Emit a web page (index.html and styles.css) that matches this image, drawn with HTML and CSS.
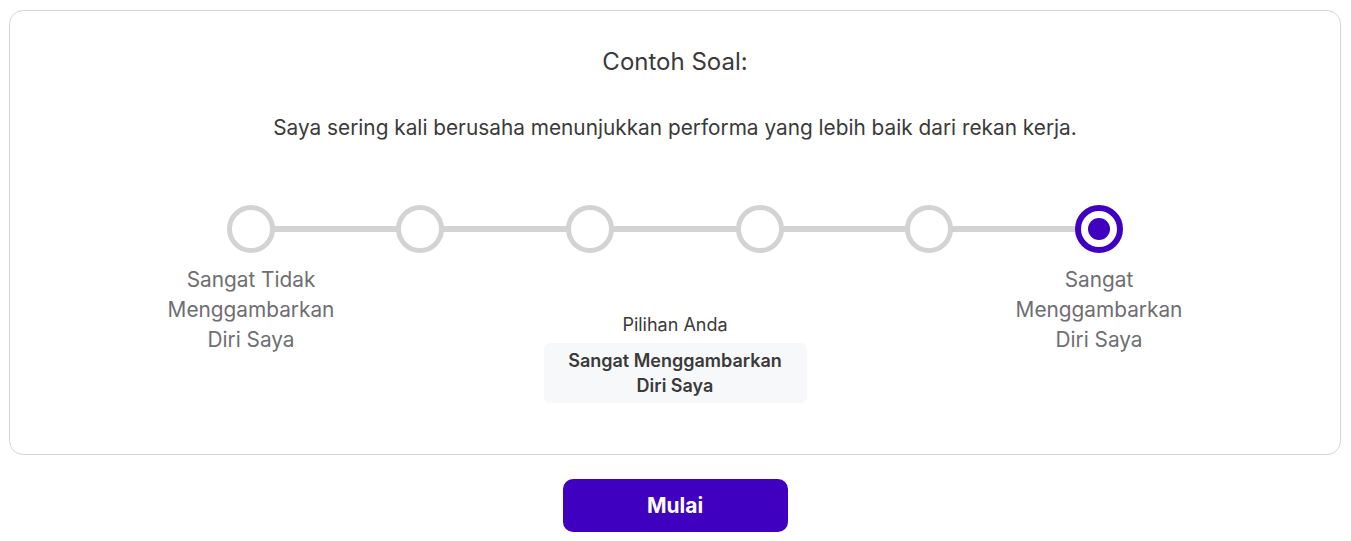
FILE: index.html
```html
<!DOCTYPE html>
<html lang="id">
<head>
<meta charset="utf-8">
<title>Contoh Soal</title>
<link rel="stylesheet" href="styles.css">
</head>
<body>
<main class="page">
  <section class="card">
    <h2 class="title">Contoh Soal:</h2>
    <p class="question">Saya sering kali berusaha menunjukkan performa yang lebih baik dari rekan kerja.</p>
    <div class="scale">
      <div class="track"></div>
      <div class="step"><span class="dot"></span></div>
      <div class="step"><span class="dot"></span></div>
      <div class="step"><span class="dot"></span></div>
      <div class="step"><span class="dot"></span></div>
      <div class="step"><span class="dot"></span></div>
      <div class="step"><span class="dot dot-active"></span></div>
    </div>
    <div class="labels">
      <div class="end-label">Sangat Tidak Menggambarkan Diri Saya</div>
      <div class="choice">
        <div class="choice-caption">Pilihan Anda</div>
        <div class="choice-box">Sangat Menggambarkan Diri Saya</div>
      </div>
      <div class="end-label">Sangat Menggambarkan Diri Saya</div>
    </div>
  </section>
  <div class="actions">
    <button class="btn-start" type="button">Mulai</button>
  </div>
</main>
</body>
</html>
```

FILE: styles.css
```css
* { box-sizing: border-box; }

html, body {
  margin: 0;
  padding: 0;
  background: #ffffff;
}

body {
  font-family: Inter, "Noto Sans", "Liberation Sans", sans-serif;
  color: #3a3a3a;
}

.page {
  padding: 10px 10px 0 9px;
}

.card {
  border: 1px solid #d6d6d6;
  border-radius: 14px;
  height: 445px;
  display: flex;
  flex-direction: column;
  align-items: center;
  padding-top: 36px;
}

.title {
  margin: 0;
  font-size: 24px;
  font-weight: 400;
  line-height: 30px;
  color: #3a3a3a;
}

.question {
  margin: 37px 0 0;
  font-size: 20.8px;
  line-height: 28px;
  color: #3a3a3a;
}

.scale {
  position: relative;
  margin-top: 63px;
  width: 1018px;
  display: grid;
  grid-template-columns: repeat(6, 1fr);
}

.track {
  position: absolute;
  left: 85px;
  right: 85px;
  top: 21px;
  height: 6px;
  background: #d3d3d3;
}

.step {
  display: flex;
  justify-content: center;
  position: relative;
}

.dot {
  width: 48px;
  height: 48px;
  border-radius: 50%;
  border: 5px solid #d3d3d3;
  background: #ffffff;
  display: flex;
  align-items: center;
  justify-content: center;
}

.dot-active {
  border: 6px solid #3f00c0;
}

.dot-active::after {
  content: "";
  width: 22px;
  height: 22px;
  border-radius: 50%;
  background: #3f00c0;
}

.labels {
  width: 1018px;
  display: grid;
  grid-template-columns: 170px 1fr 170px;
  margin-top: 12px;
}

.end-label {
  text-align: center;
  font-size: 20.8px;
  line-height: 30px;
  color: #6e6e73;
}

.choice {
  display: flex;
  flex-direction: column;
  align-items: center;
  padding-top: 49px;
}

.choice-caption {
  font-size: 18px;
  line-height: 22px;
  color: #3a3a3a;
}

.choice-box {
  margin-top: 7px;
  width: 263px;
  padding: 5px 20px;
  background: #f7f8fa;
  border-radius: 6px;
  text-align: center;
  font-size: 18px;
  font-weight: 600;
  line-height: 25px;
  color: #3a3a3a;
}

.actions {
  display: flex;
  justify-content: center;
  margin-top: 24px;
}

.btn-start {
  width: 225px;
  height: 53px;
  border: none;
  border-radius: 10px;
  background: #3f00c0;
  color: #ffffff;
  font-family: Inter, "Noto Sans", "Liberation Sans", sans-serif;
  font-size: 21px;
  font-weight: 700;
  cursor: pointer;
}
```
